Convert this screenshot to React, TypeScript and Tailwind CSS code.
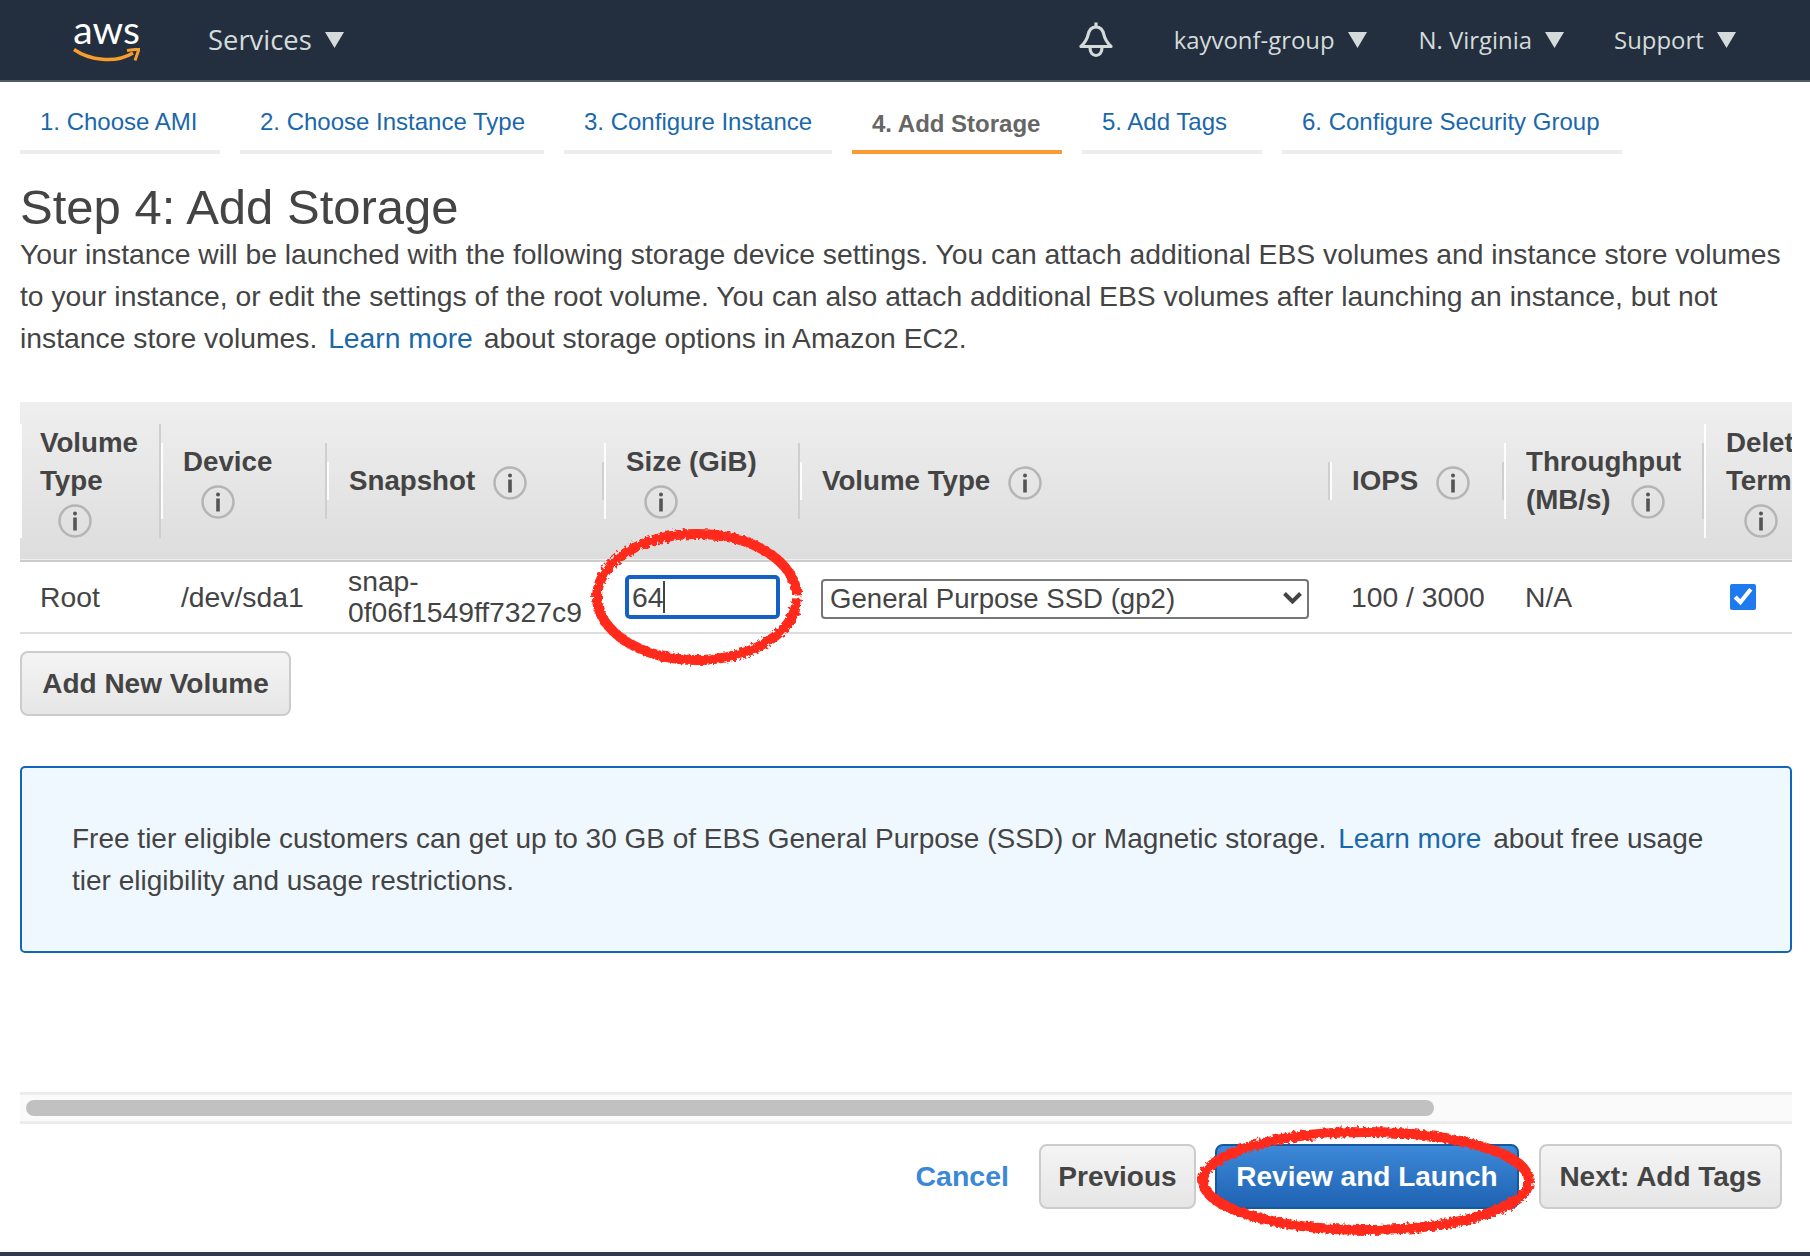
import React from 'react'

const sans = "font-['Liberation_Sans',Arial,sans-serif]"

const tabs = [
  { label: '1. Choose AMI', width: 'w-[200px]' },
  { label: '2. Choose Instance Type', width: 'w-[304px]' },
  { label: '3. Configure Instance', width: 'w-[268px]' },
  { label: '4. Add Storage', width: 'w-[210px]', active: true },
  { label: '5. Add Tags', width: 'w-[180px]' },
  { label: '6. Configure Security Group', width: 'w-[340px]' },
]

const Caret = () => (
  <svg width="19" height="16" viewBox="0 0 19 16" className="block">
    <path d="M0 0h19L9.500 16z" fill="#d5dbdb" />
  </svg>
)

const InfoIcon = ({ className = '' }: { className?: string }) => (
  <svg width="34" height="34" viewBox="0 0 34 34" className={`inline-block align-middle ${className}`}>
    <circle cx="17" cy="17" r="15.5" fill="none" stroke="#b5b5b5" strokeWidth="2.5" />
    <circle cx="17" cy="9.500" r="2" fill="#555555" />
    <rect x="15.2" y="13.500" width="3.6" height="13" fill="#555555" />
  </svg>
)

const NavItem = ({ label, className = '' }: { label: string; className?: string }) => (
  <div className={`flex items-center gap-[13px] ${className}`}>
    <span>{label}</span>
    <Caret />
  </div>
)

// 헤더 셀: 구분선 높이는 내용 높이를 따른다
const HeadCell = ({ children, width, className = 'pl-[20px]' }: { children: React.ReactNode; width: string; className?: string }) => (
  <th className={`${width} p-0 text-left align-middle text-[27.7px] font-bold`}>
    <div className={`border-l-2 border-r-2 border-l-white/90 border-r-[#cfcfcf] leading-[38px] whitespace-nowrap ${className}`}>
      {children}
    </div>
  </th>
)

const GrayButton = ({ label, className = '' }: { label: string; className?: string }) => (
  <button className={`h-[65px] rounded-[8px] border-2 border-[#cccccc] bg-gradient-to-b from-[#f4f4f4] to-[#e6e6e6] text-[28px] font-bold text-[#444444] ${className}`}>
    {label}
  </button>
)

export default function App() {
  return (
    <div className={`relative flex h-[1256px] w-[1810px] flex-col overflow-hidden bg-white text-[28.3px] text-[#444444] ${sans}`}>
      {/* 상단 내비게이션 */}
      <header className="flex h-[82px] shrink-0 items-center border-b-2 border-[#545b64] bg-[#232f3e] font-['Open_Sans',sans-serif] text-[23.9px] text-[#d5dbdb]">
        <div className="ml-[73px] flex w-[67px] flex-col items-center">
          <span className="mt-[-6px] h-[38px] font-['Lato',sans-serif] text-[39px] leading-[38px] text-white">aws</span>
          <svg width="67" height="16" viewBox="0 0 67 16" className="block">
            <path d="M1 1.500C16 12 42 16 60 5" fill="none" stroke="#f79d2b" strokeWidth="3.4" />
            <path d="M54 2.500L66 1L62 12.500" fill="none" stroke="#f79d2b" strokeWidth="3" />
          </svg>
        </div>
        <NavItem label="Services" className="ml-[68px] text-[27.4px]" />
        <svg width="34" height="36" viewBox="0 0 34 36" className="ml-[735px] block" fill="none" stroke="#d5dbdb" strokeWidth="3.2" strokeLinejoin="round">
          <path d="M17 5c-5 0-7 3-8 8-.8 4-3 7.500-7 11.500h30c-4-4-6.200-7.500-7-11.500-1-5-3-8-8-8z" />
          <path d="M17 0.500v4.500" />
          <path d="M11 25.500c0 5 2.500 8 6 8s6-3 6-8" />
        </svg>
        <NavItem label="kayvonf-group" className="ml-[61px]" />
        <NavItem label="N. Virginia" className="ml-[52px]" />
        <NavItem label="Support" className="ml-[50px]" />
      </header>

      {/* 단계 탭 */}
      <nav className="flex shrink-0 gap-[20px] pl-[20px] pt-[24px] text-[24px]">
        {tabs.map(tab => (
          <div
            key={tab.label}
            className={`${tab.width} h-[48px] border-b-4 pl-[20px] leading-[28px] ${
              tab.active ? 'border-[#ff9933] pt-[4px] font-bold text-[#666666]' : 'border-[#ededed] pt-[2px] text-[#1a68ab]'
            }`}
          >
            {tab.label}
          </div>
        ))}
      </nav>

      <main className="flex min-h-0 flex-1 flex-col pl-[20px]">
        <h1 className="mt-[25px] text-[49px] leading-[56px] font-normal text-[#444444]">Step 4: Add Storage</h1>
        <p className="mt-[-2px] leading-[42px] whitespace-nowrap">
          Your instance will be launched with the following storage device settings. You can attach additional EBS volumes and instance store volumes<br />
          to your instance, or edit the settings of the root volume. You can also attach additional EBS volumes after launching an instance, but not<br />
          instance store volumes. <a className="ml-[3px] mr-[3px] text-[#1a68ab]">Learn more</a> about storage options in Amazon EC2.
        </p>

        {/* 볼륨 테이블: 오른쪽 끝 열은 잘려서 보인다 */}
        <div className="mt-[43px] w-[1772px] shrink-0 overflow-hidden">
          <table className="w-[1884px] table-fixed border-collapse">
            <thead>
              <tr className="h-[159px] border-b-2 border-[#cccccc] bg-gradient-to-b from-[#efefef] to-[#dddddd] text-[#444444]">
                <HeadCell width="w-[141px]" className="pl-[18px]">Volume<br />Type<br /><InfoIcon className="ml-[18px]" /></HeadCell>
                <HeadCell width="w-[166px]">Device<br /><InfoIcon className="ml-[18px]" /></HeadCell>
                <HeadCell width="w-[277px]">Snapshot<InfoIcon className="ml-[18px]" /></HeadCell>
                <HeadCell width="w-[196px]">Size (GiB)<br /><InfoIcon className="ml-[18px]" /></HeadCell>
                <HeadCell width="w-[530px]">Volume Type<InfoIcon className="ml-[18px]" /></HeadCell>
                <HeadCell width="w-[174px]">IOPS<InfoIcon className="ml-[18px]" /></HeadCell>
                <HeadCell width="w-[200px]">Throughput<br />(MB/s)<InfoIcon className="ml-[20px]" /></HeadCell>
                <HeadCell width="w-[200px]">Delete on<br />Termination<br /><InfoIcon className="ml-[18px]" /></HeadCell>
              </tr>
            </thead>
            <tbody>
              <tr className="h-[72px] border-b-2 border-[#dddddd]">
                <td className="pl-[20px]">Root</td>
                <td className="pl-[20px]">/dev/sda1</td>
                <td className="pl-[21px] leading-[31px]">snap-<br />0f06f1549ff7327c9</td>
                <td className="pl-[21px]">
                  <div className="flex h-[44px] w-[155px] items-center rounded-[5px] border-[4px] border-[#1560c4] bg-white pl-[3px]">
                    <span>64</span>
                    <span className="h-[32px] w-[2px] bg-[#444444]" />
                  </div>
                </td>
                <td className="pl-[21px]">
                  <div className="relative h-[40px] w-[488px]">
                    <select className="h-[40px] w-[488px] appearance-none rounded-[4px] border-2 border-[#767676] bg-white pl-[7px] text-[27.6px] leading-[32px] text-[#444444]">
                      <option>General Purpose SSD (gp2)</option>
                    </select>
                    <svg width="19" height="12" viewBox="0 0 19 12" className="absolute right-[7px] top-[15px]" fill="none" stroke="#444444" strokeWidth="4">
                      <path d="M1.500 1.500L9.500 9.500L17.500 1.500" />
                    </svg>
                  </div>
                </td>
                <td className="pl-[21px]">100 / 3000</td>
                <td className="pl-[21px]">N/A</td>
                <td className="pl-[26px]">
                  <input type="checkbox" defaultChecked className="block h-[26px] w-[26px] accent-[#1f7af0]" />
                </td>
              </tr>
            </tbody>
          </table>
        </div>

        <GrayButton label="Add New Volume" className="mt-[17px] w-[271px] shrink-0" />

        {/* 안내 박스 */}
        <div className="mt-[50px] h-[187px] w-[1772px] shrink-0 rounded-[5px] border-2 border-[#1166bb] bg-[#f0f8ff] pl-[50px] pt-[50px] text-[28px] leading-[42px] whitespace-nowrap">
          Free tier eligible customers can get up to 30 GB of EBS General Purpose (SSD) or Magnetic storage. <a className="ml-[4px] mr-[4px] text-[#1a68ab]">Learn more</a> about free usage<br />
          tier eligibility and usage restrictions.
        </div>

        {/* 가로 스크롤바 */}
        <div className="mt-[139px] h-[32px] w-[1772px] shrink-0 border-y-[3px] border-[#ececec] bg-[#fafafa] py-[5px] pl-[6px]">
          <div className="h-[16px] w-[1408px] rounded-full bg-[#c1c1c1]" />
        </div>

        <div className="mt-[20px] flex w-[1762px] shrink-0 items-center justify-end">
          <a className="mr-[30px] text-[28.5px] font-bold text-[#3b87d8]">Cancel</a>
          <GrayButton label="Previous" className="w-[157px]" />
          <button className="ml-[19px] h-[65px] w-[304px] rounded-[8px] border-2 border-[#15599f] bg-gradient-to-b from-[#3d88d8] to-[#1f63b3] text-[28px] font-bold text-white">
            Review and Launch
          </button>
          <GrayButton label="Next: Add Tags" className="ml-[20px] w-[243px]" />
        </div>
      </main>

      <div className="h-[4px] shrink-0 bg-[#2f3b4b]" />

      {/* 스크린샷 위에 손으로 그린 빨간 표시 */}
      <svg width="1810" height="1256" className="pointer-events-none absolute left-0 top-0" fill="none" stroke="#ff2a1a" strokeWidth="10">
        <defs>
          <filter id="rough" x="-10%" y="-10%" width="120%" height="120%">
            <feTurbulence type="fractalNoise" baseFrequency="0.3" numOctaves="2" seed="4" />
            <feDisplacementMap in="SourceGraphic" scale="6" />
          </filter>
        </defs>
        <g filter="url(#rough)">
          <ellipse cx="697" cy="597" rx="100" ry="63" pathLength="100" strokeDasharray="99.4 0.6" strokeDashoffset="-0.3" />
          <ellipse cx="1366" cy="1181" rx="163" ry="49" />
        </g>
      </svg>
    </div>
  )
}
